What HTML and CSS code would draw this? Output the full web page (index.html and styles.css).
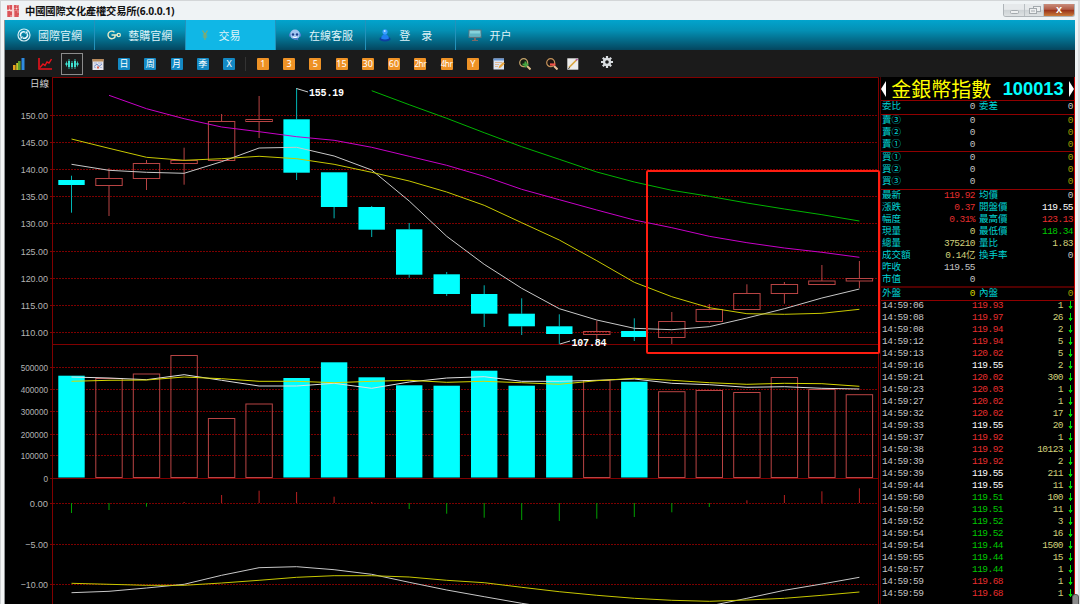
FILE: index.html
```html
<!DOCTYPE html>
<html lang="zh">
<head>
    <meta charset="UTF-8">
    <meta name="viewport" content="width=device-width, initial-scale=1.0">
    <title>中國國際文化產權交易所</title>
    <link rel="stylesheet" href="styles.css">
</head>
<body>
    <div class="window">
        <div class="titlebar">
            <svg class="seal" viewBox="0 0 12 12">
                <path d="M0 1h5M0 3h5M1 1v4M4 0v5M7 0h5M7 2h4M8 0v5M11 1v4M7 5h5M0 7h5M2 6v6M0 9h5M0 11h5M4 7v3M7 7h5M7 9h5M9 6v6M11 8v4M7 11h4"/>
            </svg>
            <span class="title">中國國際文化產權交易所(6.0.0.1)</span>
            <div class="win-buttons">
                <span class="win-btn"><svg viewBox="0 0 20 12"><rect x="6.500" y="6.500" width="8" height="3" rx="1"/></svg></span>
                <span class="win-btn"><svg viewBox="0 0 20 12"><rect x="8.500" y="2.500" width="7" height="5"/><rect x="4.500" y="4.500" width="7" height="5"/><path d="M6 7h4"/></svg></span>
                <span class="win-btn close">x</span>
            </div>
        </div>

        <div class="nav">
            <div class="tab">
                <svg viewBox="0 0 14 14"><circle cx="7" cy="7" r="6" fill="none" stroke="#d5eef5" stroke-width="1.200"/><path d="M3.800 8.500a3.300 3.300 0 0 1 4.500-4.400M10.200 5.500a3.300 3.300 0 0 1-4.500 4.400" fill="none" stroke="#e8f8fc" stroke-width="1.500"/><path d="M7.500 5.500h3v-3zM6.500 8.500h-3v3z" fill="#e8f8fc"/></svg>
                <span>國際官網</span>
            </div>
            <div class="tab">
                <svg viewBox="0 0 14 14"><path d="M7.500 4.200A3.800 3.800 0 1 0 8 9V7H4.500M8 7h3" fill="none" stroke="#e6ebc8" stroke-width="1.400"/><circle cx="11.700" cy="7" r="1.700" fill="none" stroke="#e6ebc8" stroke-width="1.200"/></svg>
                <span>藝購官網</span>
            </div>
            <div class="tab active">
                <svg viewBox="0 0 14 14"><path d="M4.500 2.500 7 6.500l2.500-4M7 6.500V12M4.800 7h4.400M4.800 9h4.400" fill="none" stroke="#8fa863" stroke-width="1.100"/></svg>
                <span>交易</span>
            </div>
            <div class="tab">
                <svg viewBox="0 0 14 14"><circle cx="7" cy="6.500" r="5" fill="#9fc4f0"/><path d="M1 5.500h1.500v3H1zM11.500 5.500H13v3h-1.500zM3.500 10h6l1 2.500-3-1z" fill="#4c7fd0"/><circle cx="5" cy="6.500" r="1.200" fill="#1c3f8c"/><circle cx="9" cy="6.500" r="1.200" fill="#1c3f8c"/><path d="M5 9q2 1.200 4 0" stroke="#fff" fill="none"/></svg>
                <span>在線客服</span>
            </div>
            <div class="tab">
                <svg viewBox="0 0 14 14"><ellipse cx="7" cy="11" rx="5.500" ry="2.500" fill="#0d3fa0"/><path d="M3 10.500q1-4.500 4-4.500t4 4.500q-4 2-8 0z" fill="#1f7ff0"/><circle cx="7" cy="3.800" r="2.600" fill="#3ba0ff"/><circle cx="6.700" cy="3" r="1" fill="#b8e2ff"/></svg>
                <span>登　录</span>
            </div>
            <div class="tab last">
                <svg viewBox="0 0 14 14"><rect x=".5" y="1.500" width="13" height="8.500" fill="#5a7480"/><rect x="1.500" y="2.500" width="11" height="6" fill="#86d3dc"/><rect x="1.500" y="5.500" width="11" height="3" fill="#5fb5c4"/><path d="M6 10h2v2H6zM4 12h6v1H4z" fill="#7b6a68"/></svg>
                <span>开户</span>
            </div>
        </div>

        <div class="toolbar">
            <div class="tool"><svg viewBox="0 0 12 12"><rect y="7" width="2.600" height="5" fill="#e8a21c"/><rect x="3.200" y="5" width="2.600" height="7" fill="#c9c22a"/><rect x="5" y="3" width="2.600" height="9" fill="#5da02e"/><rect x="8.500" width="3" height="12" fill="#2e8be0"/></svg></div>
            <div class="tool"><svg class="wide" viewBox="0 0 14 12"><path d="M1 0v11h13" fill="none" stroke="#e8121c" stroke-width="1.600"/><path d="M2 9.500 5 6l2 1.500L9 4l2 1 2.500-4" fill="none" stroke="#e8121c" stroke-width="1.400"/></svg></div>
            <div class="tool selected"><svg class="wide" viewBox="0 0 14 12"><path d="M1.500 3.500v5M4 1v10M7 3v8M10 1v10M12.500 3.500v5" stroke="#3fe0d0" stroke-width=".8"/><path d="M.5 5h2v2h-2zM3 3h2v6H3zM6 5h2v4H6zM9 3h2v6H9zM11.500 5h2v2h-2z" fill="#3fe0d0"/></svg></div>
            <div class="tool"><svg viewBox="0 0 12 12"><rect x=".5" y="1" width="11" height="11" fill="#e4e4ea"/><rect x=".5" y="1" width="11" height="2.500" fill="#b98a5a"/><path d="M2 5h3M6 5h4M2 9.500h2M8 9.500h2" stroke="#a9b8dc"/><path d="M2 8.500 5 6l2 2.500L10 6" stroke="#6f8ac8" fill="none"/><rect x="5" y="8.500" width="2" height="2" fill="#d86050"/></svg></div>
            <div class="tool"><span class="btn blue">日</span></div>
            <div class="tool"><span class="btn blue">周</span></div>
            <div class="tool"><span class="btn blue">月</span></div>
            <div class="tool"><span class="btn blue">季</span></div>
            <div class="tool"><span class="btn blue">X</span></div>
            <div class="divider"></div>
            <div class="tool"><span class="btn orange">1</span></div>
            <div class="tool"><span class="btn orange">3</span></div>
            <div class="tool"><span class="btn orange">5</span></div>
            <div class="tool"><span class="btn orange">15</span></div>
            <div class="tool"><span class="btn orange">30</span></div>
            <div class="tool"><span class="btn orange">60</span></div>
            <div class="tool"><span class="btn orange small">2hr</span></div>
            <div class="tool"><span class="btn orange small">4hr</span></div>
            <div class="tool"><span class="btn orange">Y</span></div>
            <div class="tool"><svg viewBox="0 0 12 12"><rect x=".5" y=".5" width="10.500" height="11" fill="#dbe4f2"/><path d="M.5.500H11v2H.5z" fill="#6a98d4"/><path d="M2 4.500h7M2 6.500h4M2 8.500h3" stroke="#e0b890"/><path d="m5.500 10.500.7-2.500 4-4 1.600 1.600-4 4z" fill="#e8a43a"/></svg></div>
            <div class="tool"><svg viewBox="0 0 12 12"><circle cx="4.700" cy="4.700" r="4" fill="#151d12" stroke="#c3a26a" stroke-width="1.200"/><path d="m8 8 3.500 3.500" stroke="#e0c088" stroke-width="2"/><path d="M6.500 3.500v6M3.500 6.500h6" stroke="#45a840" stroke-width="2"/></svg></div>
            <div class="tool"><svg viewBox="0 0 12 12"><circle cx="4.700" cy="4.700" r="4" fill="#1d1412" stroke="#c3925a" stroke-width="1.200"/><path d="m8 8 3.500 3.500" stroke="#e8c098" stroke-width="2"/><path d="M4 6.500h5.500" stroke="#f05048" stroke-width="2.200"/></svg></div>
            <div class="tool narrow"><svg viewBox="0 0 12 12"><rect x=".3" y=".3" width="11" height="11.400" fill="#ececec"/><path d="M2 9.500 9.500 2" stroke="#d9a540" stroke-width="1.700"/><path d="m9 2.500 1.500-1.500" stroke="#b05aa0" stroke-width="1.700"/><path d="M1.200 10.600 3 9.500" stroke="#444"/></svg></div>
            <div class="tool gear"><svg viewBox="0 0 12 12"><path d="M6 0v12M0 6h12M1.800 1.800l8.400 8.400M10.200 1.800l-8.400 8.400" stroke="#d9dde0" stroke-width="2.200"/><circle cx="6" cy="6" r="3" fill="#1b1b1b" stroke="#d9dde0" stroke-width="2.400"/></svg></div>
        </div>

        <div class="main">
            <svg id="chart" class="chart" viewBox="5 77 875 527"></svg>

            <div class="quote">
                <div class="stock">
                    <span class="arrow-left"></span>
                    <span class="name">金銀幣指數</span>
                    <span class="code">100013</span>
                    <span class="arrow-right"></span>
                </div>
                <div class="block first">
                    <div class="row"><b>委比</b><i>0</i><b>委差</b><i>0</i></div>
                </div>
                <div class="block">
                    <div class="row"><b>賣③</b><i>0</i><b></b><i class="olive">0</i></div>
                    <div class="row"><b>賣②</b><i>0</i><b></b><i class="olive">0</i></div>
                    <div class="row"><b>賣①</b><i>0</i><b></b><i class="olive">0</i></div>
                </div>
                <div class="block buy">
                    <div class="row"><b>買①</b><i>0</i><b></b><i class="olive">0</i></div>
                    <div class="row"><b>買②</b><i>0</i><b></b><i class="olive">0</i></div>
                    <div class="row"><b>買③</b><i>0</i><b></b><i class="olive">0</i></div>
                </div>
                <div class="block">
                    <div class="row"><b>最新</b><i class="red">119.92</i><b>均價</b><i>0</i></div>
                    <div class="row"><b>漲跌</b><i class="red">0.37</i><b>開盤價</b><i class="white">119.55</i></div>
                    <div class="row"><b>幅度</b><i class="red">0.31%</i><b>最高價</b><i class="red">123.13</i></div>
                    <div class="row"><b>現量</b><i class="yellow">0</i><b>最低價</b><i class="green">118.34</i></div>
                    <div class="row"><b>總量</b><i class="yellow">375210</i><b>量比</b><i class="yellow">1.83</i></div>
                    <div class="row"><b>成交額</b><i class="yellow">0.14亿</i><b>換手率</b><i>0</i></div>
                    <div class="row"><b>昨收</b><i>119.55</i><b></b><i></i></div>
                    <div class="row"><b>市值</b><i>0</i><b></b><i></i></div>
                </div>
                <div class="block thick">
                    <div class="row"><b>外盤</b><i class="gold">0</i><b>內盤</b><i class="olive">0</i></div>
                </div>
                <div class="ticks" id="ticks"></div>
            </div>
        </div>
        <div class="thumb"></div>
    </div>
    <script src="script.js"></script>
</body>
</html>
```
FILE: styles.css
```css
body {
    margin: 0;
    width: 1080px;
    height: 604px;
    overflow: hidden;
    background-color: #eff3f5;
    font-family: "Liberation Sans", "Noto Sans CJK TC", sans-serif;
}
.window {
    position: relative;
    box-sizing: border-box;
    width: 1080px;
    height: 604px;
    padding: 0 5px;
    border-top: 1px solid #d3d6d8;
    display: flex;
    flex-direction: column;
    background: linear-gradient(to right, #cfd2d4 0, #cfd2d4 1px, #f3f5f6 1px, #f3f5f6 4px, #909496 4px, #909496 5px, #eff3f5 5px, #eff3f5 1078px, #dadddf 1078px);
}

/* title bar */
.titlebar {
    height: 19px;
    flex: none;
    display: flex;
    align-items: center;
    background-color: #eff3f5;
    margin-left: -3px;
}
.seal {
    width: 12px;
    height: 12px;
    margin-left: 5px;
    background-color: #f7d5d5;
    stroke: #d02a30;
    fill: none;
}
.title {
    margin-left: 6px;
    font: bold 10.3px/18px "Noto Sans", "Noto Sans CJK TC", sans-serif;
    letter-spacing: -0.16px;
    color: #111;
    white-space: nowrap;
}
.win-buttons {
    display: flex;
    margin-left: auto;
    height: 12px;
    border: 1px solid #aeb4b8;
    border-top: none;
    border-radius: 0 0 3px 3px;
    overflow: hidden;
    margin-bottom: 0;
}
.win-btn {
    width: 20px;
    height: 12px;
    background: linear-gradient(#e6e9eb 45%, #cdd2d5 50%, #dde1e3);
    border-right: 1px solid #b9bfc3;
}
.win-btn svg {
    display: block;
    width: 20px;
    height: 12px;
    fill: #eef0f1;
    stroke: #a4aaae;
}
.win-btn + .win-btn {
    width: 18px;
}
.win-btn.close {
    width: 30px;
    border: none;
    background: linear-gradient(#c98d7c, #b25c46 45%, #97301a 50%, #c97b3a);
    color: #fff;
    font: bold 11px/10px "Liberation Sans", sans-serif;
    text-align: center;
}

/* navigation */
.nav {
    height: 30px;
    flex: none;
    display: flex;
    background: linear-gradient(#02a4cd, #0490b4 35%, #04465f);
}
.tab {
    box-sizing: border-box;
    width: 90.3px;
    height: 30px;
    padding: 0 0 1px 12px;
    display: flex;
    align-items: center;
    border-right: 1px solid #2392bb;
    color: #dff3f8;
    font-size: 11px;
    white-space: nowrap;
}
.tab svg {
    width: 14px;
    height: 14px;
    margin-right: 7px;
}
.tab.active {
    background-color: #10b7e6;
}
.tab.last {
    border: none;
}

/* toolbar */
.toolbar {
    height: 27px;
    flex: none;
    display: flex;
    align-items: center;
    padding-left: 1px;
    background-color: #1b1b1b;
}
.tool {
    width: 26.25px;
    display: flex;
    justify-content: center;
    flex: none;
}
.tool svg {
    width: 12px;
    height: 12px;
}
.tool svg.wide {
    width: 14px;
}
.tool.selected {
    box-sizing: border-box;
    width: 22.25px;
    height: 22px;
    margin: 0 2px;
    align-items: center;
    border: 1px solid #8c8c8c;
}
.tool.narrow {
    width: 16px;
}
.tool.gear {
    margin-left: 13px;
    margin-bottom: 3px;
}
.btn {
    width: 12px;
    height: 12px;
    border-radius: 1px;
    font: 9px/12px "Noto Sans", "Noto Sans CJK TC", sans-serif;
    color: #fff;
    display: flex;
    justify-content: center;
}
.blue {
    background-color: #1389c4;
}
.orange {
    background-color: #ee9226;
}
.small {
    font-size: 8px;
    letter-spacing: -0.4px;
}
.divider {
    width: 1px;
    height: 14px;
    margin: 0 3.2px;
    background-color: #333;
}

/* chart */
.main {
    flex: 1;
    display: flex;
    min-height: 0;
    background-color: #000;
}
.chart {
    width: 875px;
    height: 527px;
    flex: none;
    display: block;
}
.chart .grid {
    stroke: #7c0000;
    stroke-dasharray: 2 1;
}
.chart .frame {
    stroke: #800000;
    fill: none;
}
.chart .axis {
    font: 9.5px "Liberation Sans", sans-serif;
    fill: #b4b4b4;
}
.chart .period {
    font: 9.5px "Noto Sans CJK TC", sans-serif;
    fill: #d0d0d0;
}
.chart .mark {
    font: bold 10px "Liberation Mono", monospace;
    fill: #fff;
}
.chart .down {
    fill: #0ff;
    stroke: none;
}
.chart .down-wick {
    stroke: #00b4b4;
}
.chart .up {
    fill: none;
    stroke: #b84444;
}
.chart .line {
    fill: none;
    stroke-width: 1;
}
.chart .focus {
    fill: none;
    stroke: #ff1d10;
    stroke-width: 2;
}

/* quote panel */
.quote {
    box-sizing: border-box;
    width: 195px;
    border-right: 1px solid #c00000;
    border-left: 1px solid #500000;
    font: 9.5px/12px "Liberation Mono", "Noto Sans CJK TC", monospace;
    color: #c4c4c4;
}
.stock {
    height: 23px;
    display: flex;
    align-items: center;
    justify-content: space-between;
    white-space: nowrap;
}
.name {
    font: 20px/22px "Noto Sans CJK TC", sans-serif;
    color: #ff0;
    margin-left: 4px;
}
.code {
    font: bold 18.3px/22px "Liberation Sans", sans-serif;
    color: #0ff;
    margin: 0 4px 0 10px;
}
.arrow-left, .arrow-right {
    border: 8px solid transparent;
}
.arrow-left {
    border-left: none;
    border-right: 5px solid #fff;
}
.arrow-right {
    border-right: none;
    border-left: 5px solid #fff;
}
.block {
    border-top: 1px solid #900000;
}
.block.first {
    padding-bottom: 1px;
}
.block.buy {
    padding-bottom: 1px;
}
.block.thick {
    border-top: 2px solid #500000;
    border-bottom: 1px solid #900000;
}
.row {
    height: 12px;
    display: grid;
    grid-template-columns: 36px 57px 36px 62px;
    padding-left: 1px;
    white-space: nowrap;
}
.row b {
    font-weight: normal;
    color: #00d4d4;
}
.row b:nth-child(3) {
    padding-left: 4px;
}
.row i {
    font-style: normal;
    text-align: right;
    letter-spacing: -0.53px;
}
.ticks {
    margin-top: -1px;
}
.tick {
    height: 12px;
    display: grid;
    grid-template-columns: 60px 61px 60px 12px;
    padding-left: 1px;
    letter-spacing: -0.53px;
}
.tick span:nth-child(2), .tick .yellow {
    text-align: right;
}
.tick svg {
    width: 5px;
    height: 9px;
    margin: 1px 0 0 5px;
    fill: #00e000;
    stroke: #00e000;
}
.red {
    color: #e62e2e;
}
.white {
    color: #fff;
}
.green {
    color: #00c800;
}
.yellow {
    color: #d2d27c;
}
.gold {
    color: #d8d800;
}
.olive {
    color: #a0a000;
}
.thumb {
    position: absolute;
    right: 1px;
    bottom: -4px;
    width: 5px;
    height: 12px;
    border: 1px solid #555;
    border-radius: 3px;
    background-color: #8a8a8a;
}
```
FILE: script.js
```js
const chart = document.getElementById('chart');
const step = 37.52;
const x0 = 71.5;
const half = 13.2;
let out = '';

// [up, high, top, bottom, low]
const candles = [
    [0, 175.7, 180, 185, 212.7], [1, 168.3, 178.5, 185.5, 216], [1, 160, 163.5, 178.5, 190],
    [1, 147.7, 160.5, 163.5, 184.7], [1, 114, 121.5, 160.5, 160.5], [1, 96, 119.5, 121.5, 138],
    [0, 88, 119.3, 172.7, 180], [0, 172.3, 172.3, 207, 218.3], [0, 206, 207, 229.7, 237],
    [0, 223, 229.3, 274.7, 277.7], [0, 272, 274.3, 294, 296], [0, 285.3, 294, 313.7, 327],
    [0, 298.3, 313.7, 326.3, 335], [0, 314.3, 326.3, 334, 344.3], [1, 320.7, 331.5, 334.5, 341.7],
    [0, 318.3, 331, 337, 341], [1, 312, 321.5, 337.5, 344], [1, 304, 309.5, 321.5, 322.7],
    [1, 284.3, 293.5, 309.5, 309.5], [1, 282, 284.5, 293.5, 303.7], [1, 265, 281, 284.5, 284.5],
    [1, 261, 278.5, 281, 288]
];
const volumes = [375.7, 378.5, 374, 355.5, 418.5, 404, 378, 362.3, 377.3, 385.3, 385.7, 370.7, 385.7, 375.7, 380.5, 381.7, 391.7, 390.5, 392.5, 377.5, 389.5, 394.7];
const macd = [513, 510, 506.7, 502, 495, 490.7, 492, 496.7, 502, 509, 513.7, 517.7, 520, 521, 518.7, 517, 512.3, 507, 500.3, 495, 491.3, 488.3];

// [colour, first candle, values]
const lines = [
    ['#c8c8c8', 0, [164.3, 170.3, 172.3, 173.3, 161.7, 148, 147.3, 156, 170, 201, 236.3, 264.3, 288.3, 308.7, 320, 328.3, 329.7, 326.7, 318, 308.7, 298, 289]],
    ['#c8c800', 0, [139, 148.3, 157.3, 160.3, 158.7, 156.3, 158.7, 164.3, 172.3, 181, 192, 205.3, 222.7, 240, 260.7, 282.3, 296.7, 307.7, 313.7, 314.3, 313.3, 309.3]],
    ['#c800c8', 1, [95.3, 108.7, 118.7, 127, 131.7, 136.7, 140.3, 147.3, 156.3, 165.3, 176.3, 189.3, 199.7, 210, 220, 227.7, 236.3, 242.7, 248, 252.3, 257.3]],
    ['#00b400', 8, [90.7, 104.7, 118.3, 132.7, 146.7, 159.3, 172, 182, 190.3, 196.3, 203, 209, 214.7, 221]],
    ['#e0e0e0', 0, [377, 378, 379.7, 374.7, 380.3, 386, 386, 383.3, 388.3, 382, 378, 376.7, 381.3, 381.3, 380.3, 379, 383.3, 384.7, 387.3, 386.7, 388.3, 389]],
    ['#d8d800', 0, [381.3, 380.3, 380, 377, 378.7, 381.3, 381.3, 382.7, 381.3, 380.3, 382.3, 381.3, 382.7, 384.3, 380.7, 378.3, 380.3, 382.7, 384.3, 383.3, 383.7, 386.3]],
    ['#c8c8c8', 0, [592.7, 591.3, 588, 584.3, 575.3, 567.7, 566.7, 569.7, 574.3, 582.3, 590, 596.7, 603.3, 609, 613, 614, 611, 606, 598.3, 590.3, 584, 577.3]],
    ['#c8c800', 0, [583.3, 584.3, 585.3, 585.3, 583, 580.3, 577.3, 575.7, 575.7, 577, 580.3, 582.7, 587.3, 591.7, 595.3, 598.3, 600.3, 601.3, 600, 598.3, 595.3, 592]]
];

const axis = [
    ['150.00', 115.5], ['145.00', 142.5], ['140.00', 169.5], ['135.00', 196.5], ['130.00', 223.5],
    ['125.00', 251.5], ['120.00', 278.5], ['115.00', 305.5], ['110.00', 332.5],
    ['500000', 367.5], ['400000', 389.5], ['300000', 411.5], ['200000', 434.5], ['100000', 455.5], ['0', 478.5],
    ['0.00', 503.5], ['−5.00', 544.5], ['−10.00', 584.5]
];

axis.forEach(([label, y]) => {
    const w = label.length * 4.55;
    out += `<path class="grid" d="M50 ${y}H878"/>`;
    out += `<text class="axis" x="${48 - w}" y="${y + 3.5}" textLength="${w}" lengthAdjust="spacingAndGlyphs">${label}</text>`;
});
out += '<path class="frame" d="M52.500 77V604M53 77.500H878.500V604M53 344.500H878M53 478.500H878"/>';
out += '<text class="period" x="30" y="87">日線</text>';

candles.forEach(([up, high, top, bottom, low], i) => {
    const x = x0 + i * step;
    const l = (x - half).toFixed(1);
    const cx = x.toFixed(1);
    const cls = up ? 'up' : 'down';
    out += `<path class="${up ? 'up' : 'down-wick'}" d="M${cx} ${high}V${top}M${cx} ${bottom}V${low}"/>`;
    out += `<rect class="${cls}" x="${l}" y="${top}" width="${half * 2}" height="${bottom - top}"/>`;
    out += `<rect class="${cls}" x="${l}" y="${volumes[i]}" width="${half * 2}" height="${477.5 - volumes[i]}"/>`;
    out += `<path stroke="${macd[i] > 503 ? '#00a000' : '#b82020'}" d="M${cx} 503V${macd[i]}"/>`;
});

lines.forEach(([color, start, values]) => {
    const points = values.map((y, i) => (x0 + (i + start) * step).toFixed(1) + ',' + y).join(' ');
    out += `<polyline class="line" stroke="${color}" points="${points}"/>`;
});

// highest and lowest price
out += '<path stroke="#ccc" d="M296.500 88.500 308 92M560 344 570 341"/>';
out += '<text class="mark" x="309" y="96" textLength="35">155.19</text>';
out += '<text class="mark" x="571.500" y="345.500" textLength="35">107.84</text>';
out += '<rect class="focus" x="647" y="171" width="232" height="182" rx="1"/>';
chart.innerHTML = out;

const ticks = [
    ['14:59:06', '119.93', 1], ['14:59:08', '119.97', 26], ['14:59:08', '119.94', 2], ['14:59:12', '119.94', 5],
    ['14:59:13', '120.02', 5], ['14:59:16', '119.55', 2], ['14:59:21', '120.02', 300], ['14:59:23', '120.03', 1],
    ['14:59:27', '120.02', 1], ['14:59:32', '120.02', 17], ['14:59:33', '119.55', 20], ['14:59:37', '119.92', 1],
    ['14:59:38', '119.92', 10123], ['14:59:39', '119.92', 2], ['14:59:39', '119.55', 211], ['14:59:44', '119.55', 11],
    ['14:59:50', '119.51', 100], ['14:59:50', '119.51', 11], ['14:59:52', '119.52', 3], ['14:59:54', '119.52', 16],
    ['14:59:54', '119.44', 1500], ['14:59:55', '119.44', 15], ['14:59:57', '119.44', 1], ['14:59:59', '119.68', 1],
    ['14:59:59', '119.68', 1]
];
document.getElementById('ticks').innerHTML = ticks.map(([time, price, vol]) => {
    const cls = price > 119.55 ? 'red' : price < 119.55 ? 'green' : 'white';
    return `<div class="tick"><span>${time}</span><span class="${cls}">${price}</span><span class="yellow">${vol}</span><svg viewBox="0 0 5 9"><path d="M2.500 0v8M1 5.500h3l-1.500 2z"/></svg></div>`;
}).join('');
```
